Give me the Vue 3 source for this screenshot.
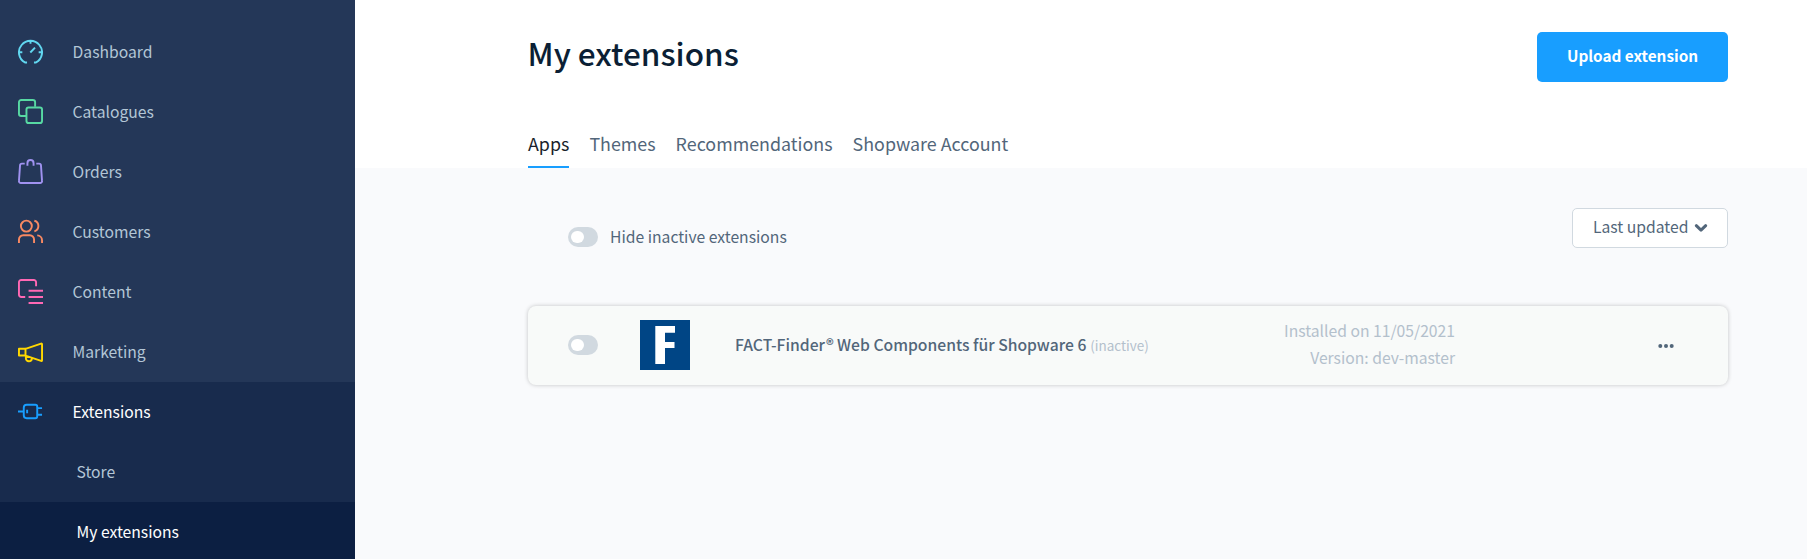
<script setup>
const items = [
  { id: 'dashboard', label: 'Dashboard', color: '#61d7f0' },
  { id: 'catalogues', label: 'Catalogues', color: '#57d9a3' },
  { id: 'orders', label: 'Orders', color: '#a092f0' },
  { id: 'customers', label: 'Customers', color: '#f88962' },
  { id: 'content', label: 'Content', color: '#ff68b4' },
  { id: 'marketing', label: 'Marketing', color: '#ffd700' },
]
const tabs = ['Apps', 'Themes', 'Recommendations', 'Shopware Account']
</script>

<template>
  <div class="page">
    <aside class="sidebar">
      <nav>
        <a v-for="item in items" :key="item.id" class="nav-item">
          <svg class="icon" viewBox="0 0 26 26" :style="{ color: item.color }">
            <template v-if="item.id === 'dashboard'">
              <path d="M9.400 24.400H7.200A12 12 0 1 1 18.800 24.400H16.600M13 2v3M1.200 13.700h3.300M21.500 13.700h3.300M12.800 14l4.900-5.100" />
            </template>
            <template v-else-if="item.id === 'catalogues'">
              <path d="M9 17.700H3.400a2.400 2.400 0 0 1-2.400-2.400V3.400A2.400 2.400 0 0 1 3.400 1h12a2.400 2.400 0 0 1 2.400 2.400V8" />
              <rect x="8.800" y="8.800" width="16.200" height="16.200" rx="2.200" />
            </template>
            <template v-else-if="item.id === 'orders'">
              <path d="M7 4.800H4.100a2 2 0 0 0-2 1.900L1 22.800a2 2 0 0 0 2 2.200h20a2 2 0 0 0 2-2.200L23.900 6.700a2 2 0 0 0-2-1.900H19M9.800 7V4.300A3.200 3.200 0 0 1 13 1.100a3.200 3.200 0 0 1 3.200 3.200V7" />
            </template>
            <template v-else-if="item.id === 'customers'">
              <circle cx="8.700" cy="7.400" r="5.700" />
              <path d="M1 25v-3.700a4.400 4.400 0 0 1 4.400-4.400h6.900a4.400 4.400 0 0 1 4.400 4.400V25M17 1.800a5.700 5.700 0 0 1 0 11M20 17a5.200 5.200 0 0 1 5 5.100V25" />
            </template>
            <template v-else-if="item.id === 'content'">
              <path d="M7.500 18.700H3.400A2.400 2.400 0 0 1 1 16.300V3.400A2.400 2.400 0 0 1 3.400 1h13a2.400 2.400 0 0 1 2.400 2.400V7.500M11 12.300h15M11 18.700h15M11 25h15" />
            </template>
            <template v-else>
              <path d="M1 10.200h6.800v7H1zM7.800 10.200 24 4.800q1-.3 1 .8v16.400q0 1.100-1 .8L7.800 17.200M8.200 17.400v2.600a3.100 3.100 0 0 0 6.200.2" />
            </template>
          </svg>
          <span>{{ item.label }}</span>
        </a>
      </nav>
      <div class="group">
        <a class="nav-item active">
          <svg class="icon plug" viewBox="0 0 26 26">
            <path d="M0 13h6M9 6h9a2 2 0 0 1 2 2v10a2 2 0 0 1-2 2H9a3 3 0 0 1-3-3V9a3 3 0 0 1 3-3zM20 9.500h5M20 16.300h5M9.500 11.300v3.400" />
          </svg>
          <span>Extensions</span>
        </a>
        <a class="sub-item">Store</a>
        <a class="sub-item current">My extensions</a>
      </div>
    </aside>

    <main class="main">
      <header class="header">
        <div class="title-row">
          <h1>My extensions</h1>
          <button class="upload">Upload extension</button>
        </div>
        <div class="tabs">
          <a v-for="(tab, i) in tabs" :key="tab" class="tab" :class="{ selected: i === 0 }">{{ tab }}</a>
        </div>
      </header>

      <section class="content">
        <div class="toolbar">
          <div class="filter">
            <span class="switch"></span>
            <span class="filter-label">Hide inactive extensions</span>
          </div>
          <div class="sort">
            <span>Last updated</span>
            <svg class="chevron" viewBox="0 0 14 10"><path d="M2.300 2.700 7 7.200l4.700-4.500" /></svg>
          </div>
        </div>
        <article class="card">
          <span class="switch"></span>
          <svg class="logo" viewBox="0 0 50 50">
            <rect width="50" height="50" fill="#004585" />
            <path d="M15.300 6H35v6.800H25V22h9.500v6H25v16h-9.700z" fill="#fff" />
          </svg>
          <div class="name"><span class="name-text">FACT-Finder® Web Components für Shopware 6</span><span class="state">(inactive)</span></div>
          <div class="meta">
            <span>Installed on 11/05/2021</span>
            <span>Version: dev-master</span>
          </div>
          <svg class="more" viewBox="0 0 16 4">
            <circle cx="2.300" cy="2" r="2" /><circle cx="8" cy="2" r="2" /><circle cx="13.700" cy="2" r="2" />
          </svg>
        </article>
      </section>
    </main>
  </div>
</template>

<style>
body { margin: 0; overflow: hidden; }
</style>

<style scoped>
.page {
  display: flex;
  width: 100%;
  height: 559px;
  overflow: hidden;
  font-family: "Noto Sans CJK SC", "Noto Sans", sans-serif;
  font-size: 15.700px;
  color: #52667a;
  background: #f9fafc;
}
.sidebar {
  flex: none;
  box-sizing: border-box;
  width: 355px;
  padding-top: 22px;
  background: #243758;
  color: #b3c6d6;
}
.nav-item { display: flex; align-items: center; box-sizing: border-box; height: 60px; padding: 0 0 1px 18px; }
.icon { flex: none; width: 25px; height: 25px; margin-right: 29.500px; fill: none; stroke: currentColor; stroke-width: 2; stroke-linejoin: round; }
.nav-item span { padding-bottom: 1px; }
.plug { color: #189eff; }
.group { background: #182b4d; }
.active { color: #fff; }
.sub-item { display: flex; align-items: center; box-sizing: border-box; height: 60px; padding: 0 0 2px 76.500px; }
.current { background: #0c1f42; color: #fff; }
.main { flex: 1; }
.header { box-sizing: border-box; height: 168px; padding: 32px 79px 0 173px; background: #fff; }
.title-row { display: flex; justify-content: space-between; height: 95px; align-items: flex-start; }
h1 { margin: 0 0 0 -.5px; font-size: 31.500px; font-weight: 500; line-height: 40px; color: #0b1f35; }
.upload {
  width: 191px; height: 50px; padding: 0 0 4px; border: 0; border-radius: 5px;
  background: #189eff; color: #fff; font: inherit; font-size: 15.300px; font-weight: 700;
}
.tabs { display: flex; gap: 20px; height: 41px; }
.tab { box-sizing: border-box; height: 41px; line-height: 33px; font-size: 17.880px; }
.selected { color: #1a1f2b; border-bottom: 2px solid #189eff; }
.content { padding: 40px 79px 0 173px; }
.toolbar { display: flex; justify-content: space-between; align-items: flex-start; height: 98px; }
.filter { display: flex; align-items: center; gap: 12px; height: 58px; padding-left: 40px; }
.filter-label { padding-bottom: 2px; }
.switch { flex: none; box-sizing: border-box; width: 30px; height: 20px; padding: 4px 3px; border-radius: 10px; background: #d1d9e0; }
.switch::before { content: ""; display: block; width: 13px; height: 12px; border-radius: 6px; background: #fff; }
.sort {
  display: flex; align-items: center; box-sizing: border-box; width: 156px; height: 40px; padding: 0 19px 0 20px;
  border: 1px solid #d1d9e0; border-radius: 5px; background: #fff;
  justify-content: space-between;
}
.sort span { padding-bottom: 4px; }
.chevron { width: 14px; height: 10px; fill: none; stroke: #52667a; stroke-width: 3; stroke-linecap: round; stroke-linejoin: round; }
.card {
  display: flex; align-items: center; box-sizing: border-box; height: 79px; padding: 0 0 1px 40px;
  border-radius: 8px; background: #f8faf9; box-shadow: 0 0 4px rgba(0, 0, 0, .22);
}
.logo { flex: none; width: 50px; height: 50px; margin: 0 45px 0 42px; }
.name { flex: none; width: 520px; white-space: nowrap; padding-bottom: 1px; }
.name-text { font-weight: 500; }
.state { margin-left: 4px; font-size: 13.450px; color: #b3c0cc; }
.meta { display: flex; flex-direction: column; align-items: flex-end; width: 200px; padding-bottom: 2px; line-height: 27px; color: #b3c0cc; }
.more { width: 16px; height: 4px; margin: 1px 0 0 203px; fill: #52667a; }
</style>
